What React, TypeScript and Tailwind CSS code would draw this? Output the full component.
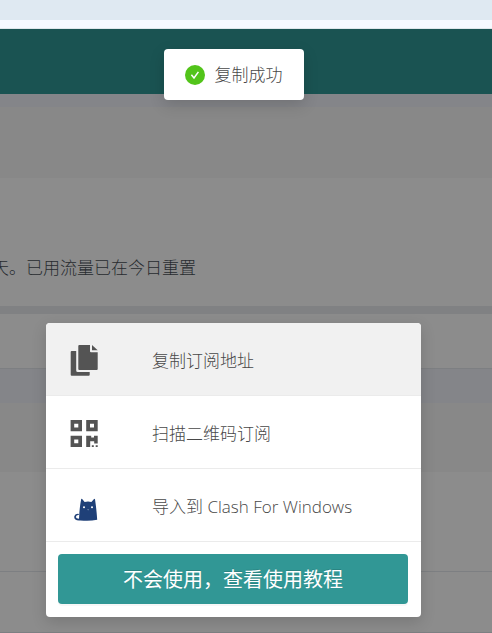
import type { ReactNode } from "react";

function CopyIcon() {
  return (
    <svg viewBox="0 0 28 33" className="h-[33px] w-7" fill="#545454" aria-hidden="true">
      <path d="M9.3 0H20V6.3Q20 7.3 21 7.3H27.7V24Q27.7 25 26.7 25H9.3Q8.3 25 8.3 24V1Q8.3 0 9.3 0Z" />
      <path d="M22 0L27.7 5.3H22Z" />
      <path d="M1.7 6H6.2V25.5Q6.2 27 7.7 27H19.7V29.7Q19.7 30.7 18.7 30.7H1.7Q.7 30.7 .7 29.7V7Q.7 6 1.7 6Z" />
    </svg>
  );
}

function QrIcon() {
  return (
    <svg viewBox="0 0 28 28" className="size-7" fill="#545454" fillRule="evenodd" aria-hidden="true">
      <path d="M.6 0H12V11.3H.6ZM4.2 3.7V7.6H8.3V3.7Z" />
      <path d="M16.2 0H27.7V11.3H16.2ZM20 3.7V7.6H24V3.7Z" />
      <path d="M.6 15.7H12V27H.6ZM4.2 19.4V23.3H8.3V19.4Z" />
      <path d="M16.2 15.7H21.2V17.4H24V15.7H27.7V23.6H24.2V21.2H20.2V27H16.2ZM21.8 25.3H23.8V27H21.8ZM25.7 25.3H27.7V27H25.7Z" />
    </svg>
  );
}

function CatIcon() {
  return (
    <svg viewBox="0 -3 28 28" className="size-7" aria-hidden="true">
      <path
        d="M11.2 3Q11.8 2.2 12.4 3.2L14.6 6Q18 5.2 21.4 6L23.8 3.2Q24.5 2.2 25 3.2Q26.6 14 27.2 23.8Q19 25.4 10.4 24.4Q7.2 24.8 5.4 23.6Q3.8 22.2 4.4 20Q5.2 17.8 8 17.8Q9.4 18 8.8 18.8Q6 19.2 5.8 21Q6 22.8 9 22.8Q9.4 12 11.2 3Z"
        fill="#1f4078"
      />
      <circle cx="14" cy="11.2" r="1" fill="#fff" />
      <circle cx="22" cy="11.2" r="1" fill="#fff" />
      <path d="M17.2 13.2H19L18.1 14.4Z" fill="#8fa0bb" />
    </svg>
  );
}

function MenuItem({ icon, label, active = false }: { icon: ReactNode; label: string; active?: boolean }) {
  return (
    <li>
      <button
        type="button"
        className={`flex h-[73px] w-full items-center gap-[54px] border-b border-[#ebebeb] px-6 pt-1 text-left text-[17px] font-light text-[#484848] ${active ? "rounded-t bg-[#f1f1f1]" : "bg-white"}`}
      >
        {icon}
        <span>{label}</span>
      </button>
    </li>
  );
}

export default function App() {
  return (
    <div className="flex min-h-screen flex-col overflow-hidden font-['Open_Sans','Noto_Sans_CJK_SC',sans-serif]">
      <div className="h-5 bg-[#dfe9f2]" />
      <div className="h-[9px] border-b border-[#dfe6ea] bg-[#f6f9ff]" />
      <div className="relative grow bg-white">
        <header className="h-[65px] bg-[#319795]" />
        <div className="h-[13px] bg-[#f0f3fa]" />
        <main>
          <section>
            <div className="h-[71px] bg-[#f8f8f8]" />
            <div className="flex h-32 items-center pt-[52px]">
              <p className="-ml-2 whitespace-nowrap text-[17px] font-light text-[#495057]">
                天。已用流量已在今日重置
              </p>
            </div>
          </section>
          <div className="h-2 bg-[#e9ecef]" />
          <section>
            <div className="h-[55px] border-b border-[#e4e7ed]" />
            <div className="h-[34px] bg-[#f0f3fa]" />
            <div className="h-[69px] bg-[#f8f8f8]" />
            <div className="h-[100px] border-b border-[#e4e7ed]" />
            <div className="h-[61px] border-b border-[#e4e7ed]" />
          </section>
        </main>

        <div className="absolute inset-0 bg-black/45 pt-5 pr-[71px] pl-[46px]">
          <div
            role="status"
            className="mx-auto flex h-[51px] w-fit items-center gap-[10px] rounded bg-white px-[21px] text-[17px] font-light text-[#484848] shadow-[0_5px_15px_rgba(0,0,0,0.15)]"
          >
            <svg viewBox="0 0 20 20" className="size-5" aria-hidden="true">
              <circle cx="10" cy="10" r="10" fill="#52c41a" />
              <path d="M6.4 9.8L9 13L13.4 6.9" fill="none" stroke="#fff" strokeWidth="1.5" />
            </svg>
            <span>复制成功</span>
          </div>

          <div
            role="dialog"
            aria-label="订阅"
            className="mt-[223px] rounded bg-white shadow-[0_5px_15px_rgba(0,0,0,0.15)]"
          >
            <ul>
              <MenuItem icon={<CopyIcon />} label="复制订阅地址" active />
              <MenuItem icon={<QrIcon />} label="扫描二维码订阅" />
              <MenuItem icon={<CatIcon />} label="导入到 Clash For Windows" />
            </ul>
            <div className="pt-3 pr-[13px] pb-[13px] pl-3">
              <button
                type="button"
                className="h-[50px] w-full rounded bg-[#319795] pt-0.5 text-xl text-white shadow-[0_2px_0_rgba(0,0,0,0.03)] [text-shadow:0_-1px_0_rgba(0,0,0,0.12)]"
              >
                不会使用，查看使用教程
              </button>
            </div>
          </div>
        </div>
      </div>
    </div>
  );
}
